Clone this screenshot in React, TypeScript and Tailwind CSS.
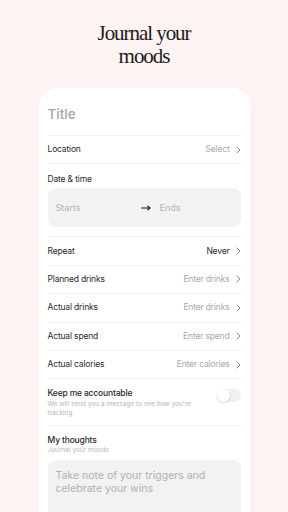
import React from "react";

const sans = { fontFamily: "Inter, 'Noto Sans', sans-serif" };

function Chevron({ className = "" }: { className?: string }) {
  return (
    <svg width="5" height="8" viewBox="0 0 5 8" className={className} fill="none">
      <path d="M1 1l3 3-3 3" stroke="#8a8a8a" strokeWidth="1" strokeLinecap="round" strokeLinejoin="round" />
    </svg>
  );
}

function Row({ label, value, dark }: { label: string; value: string; dark?: boolean }) {
  return (
    <div className="flex h-[28.4px] shrink-0 items-center justify-between border-b border-[#f2f0f0]">
      <span className="text-[8.5px] text-[#2a2a2a] tracking-[-0.02em]">{label}</span>
      <span className="flex items-center gap-[6px]">
        <span className={`text-[8.5px] tracking-[-0.02em] ${dark ? "text-[#2a2a2a]" : "text-[#a9a9a9]"}`}>{value}</span>
        <Chevron />
      </span>
    </div>
  );
}

export default function App() {
  return (
    <div className="flex h-[512px] w-[288px] flex-col overflow-hidden bg-[#fcf3f2]" style={sans}>
      <div className="flex h-[88px] shrink-0 flex-col items-center pt-[22px]">
        <h1
          className="text-center text-[21px] leading-[23px] tracking-[-0.05em] text-[#1b1b1b]"
          style={{ fontFamily: "'Liberation Serif', serif" }}
        >
          Journal your
          <br />
          moods
        </h1>
      </div>
      <div className="mx-auto flex min-h-0 w-[211px] flex-1 flex-col overflow-hidden rounded-t-[18px] bg-white px-[9px]">
        <div className="flex h-[48px] shrink-0 items-center border-b border-[#f2f0f0] pt-[6px]">
          <span className="text-[13.5px] font-medium text-[#a6a6a6]">Title</span>
        </div>
        <Row label="Location" value="Select" />
        <div className="flex shrink-0 flex-col pt-[9px]">
          <span className="text-[8.5px] leading-[12px] tracking-[-0.02em] text-[#2a2a2a]">Date &amp; time</span>
          <div className="mt-[3px] flex h-[39px] items-center rounded-[8px] bg-[#f2f2f2] pl-[8px]">
            <span className="w-[85px] text-[9px] text-[#b3b3b3]">Starts</span>
            <svg width="10" height="6" viewBox="0 0 10 6" fill="none">
              <path d="M0 3h9M6.5 1l2.5 2-2.5 2" stroke="#1b1b1b" strokeWidth="1.1" />
            </svg>
            <span className="ml-[9px] text-[9px] text-[#b3b3b3]">Ends</span>
          </div>
        </div>
        <div className="mt-[9px] shrink-0 border-b border-[#f2f0f0]" />
        <Row label="Repeat" value="Never" dark />
        <Row label="Planned drinks" value="Enter drinks" />
        <Row label="Actual drinks" value="Enter drinks" />
        <Row label="Actual spend" value="Enter spend" />
        <Row label="Actual calories" value="Enter calories" />
        <div className="flex h-[47px] shrink-0 items-start justify-between border-b border-[#f2f0f0] pt-[8px]">
          <div className="flex flex-col">
            <span className="text-[8.5px] font-medium leading-[12px] tracking-[-0.02em] text-[#2a2a2a]">Keep me accountable</span>
            <span className="mt-[1px] w-[150px] text-[6.5px] leading-[9px] text-[#b5b5b5]">
              We will send you a message to see how you're tracking
            </span>
          </div>
          <div className="relative mt-[2px] h-[13px] w-[24px] rounded-full bg-[#f0f0f0]">
            <div className="absolute left-0 top-0 h-[13px] w-[13px] rounded-full bg-white shadow-[0_1px_2px_rgba(0,0,0,0.15)]" />
          </div>
        </div>
        <div className="flex shrink-0 flex-col pt-[8px]">
          <span className="text-[8.5px] font-medium leading-[12px] tracking-[-0.02em] text-[#2a2a2a]">My thoughts</span>
          <span className="text-[6.5px] leading-[9px] text-[#b5b5b5]">Journal your moods</span>
          <div className="mt-[5px] h-[60px] rounded-t-[8px] bg-[#f2f2f2] px-[8px] pt-[9px]">
            <p className="text-[10.5px] leading-[13px] text-[#b0b0b0]">
              Take note of your triggers and
              <br />
              celebrate your wins
            </p>
          </div>
        </div>
      </div>
    </div>
  );
}
